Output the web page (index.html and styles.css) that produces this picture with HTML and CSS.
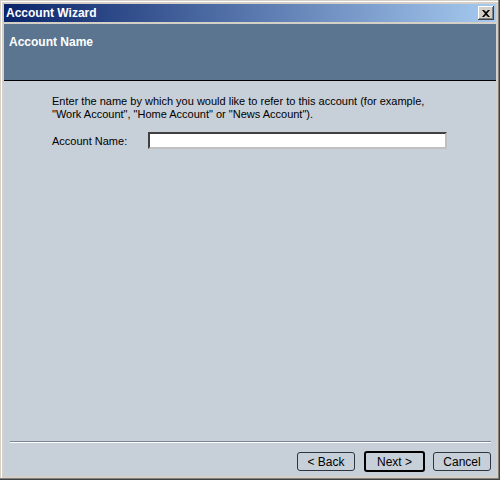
FILE: index.html
```html
<!DOCTYPE html>
<html>

<head>
	<meta charset="utf-8">
	<title>Account Wizard</title>
	<link rel="stylesheet" href="styles.css">
</head>

<body>
	<div class="window">
		<div class="titlebar">
			<span class="title">Account Wizard</span>
			<span class="close-btn">
				<svg width="8" height="7" viewBox="0 0 8 7">
					<path d="M0 0h2l2 2 2-2h2L5 3.5 8 7H6L4 5 2 7H0l3-3.5z" fill="#000"/>
				</svg>
			</span>
		</div>
		<div class="page-head">Account Name</div>
		<div class="page-body">
			<p class="intro">Enter the name by which you would like to refer to this account (for example,<br>"Work Account", "Home Account" or "News Account").</p>
			<div class="field-row">
				<label class="field-label" for="acct">Account Name:</label>
				<input type="text" id="acct" class="field-input">
			</div>
		</div>
		<div class="page-foot">
			<div class="sep"></div>
			<div class="buttons">
				<button class="btn">&lt; Back</button>
				<button class="btn btn-default">Next &gt;</button>
				<button class="btn">Cancel</button>
			</div>
		</div>
	</div>
</body>

</html>
```

FILE: styles.css
```css
html, body {
	margin: 0;
	padding: 0;
}

body {
	font-family: "Liberation Sans", "DejaVu Sans", sans-serif;
	font-size: 11px;
	color: #000;
}

.window {
	width: 500px;
	height: 480px;
	box-sizing: border-box;
	padding: 4px;
	background: #d4d0c8;
	box-shadow: inset -1px -1px #404040, inset -2px -2px #808080, inset 1px 1px #d4d0c8, inset 2px 2px #fff;
	display: flex;
	flex-direction: column;
}

.titlebar {
	height: 18px;
	background: linear-gradient(to right, #0a246a, #a6caf0);
	display: flex;
	align-items: center;
	justify-content: space-between;
	padding: 0 2px;
	margin-bottom: 2px;
}

.title {
	color: #fff;
	font-weight: bold;
	font-size: 12px;
}

.close-btn {
	width: 16px;
	height: 14px;
	box-sizing: border-box;
	background: #d4d0c8;
	box-shadow: inset -1px -1px #404040, inset 1px 1px #fff, inset -2px -2px #808080;
	display: flex;
	align-items: center;
	justify-content: center;
}

.page-head {
	height: 57px;
	background: #5b7591;
	border-bottom: 1px solid #000;
	color: #fff;
	font-weight: bold;
	font-size: 12px;
	padding: 11px 0 0 5px;
	box-sizing: border-box;
}

.page-body {
	flex: 1;
	background: #c7cfd8;
	padding: 14px 0 0 48px;
}

.intro {
	margin: 0;
	line-height: 13px;
}

.field-row {
	display: flex;
	align-items: center;
	margin-top: 11px;
}

.field-label {
	width: 96px;
}

.field-input {
	width: 299px;
	height: 17px;
	box-sizing: border-box;
	margin: 0;
	padding: 0 3px;
	border: 2px solid;
	border-color: #404040 #c0c0c0 #c0c0c0 #404040;
	background: #fff;
	font: inherit;
	outline: none;
}

.page-foot {
	background: #c7cfd8;
	padding: 0 5px 4px 6px;
}

.sep {
	border-top: 1px solid #7a8494;
	border-bottom: 1px solid #fff;
	margin-bottom: 8px;
}

.buttons {
	display: flex;
	justify-content: flex-end;
	align-items: center;
}

.btn {
	width: 58px;
	height: 19px;
	margin: 0;
	padding: 0;
	background: #c7cfd8;
	border: 1px solid #2e3440;
	border-radius: 3px;
	font: inherit;
	font-size: 12px;
	color: #000;
}

.btn-default {
	width: 61px;
	height: 21px;
	margin: 0 8px 0 9px;
	border: 2px solid #000;
}
```
